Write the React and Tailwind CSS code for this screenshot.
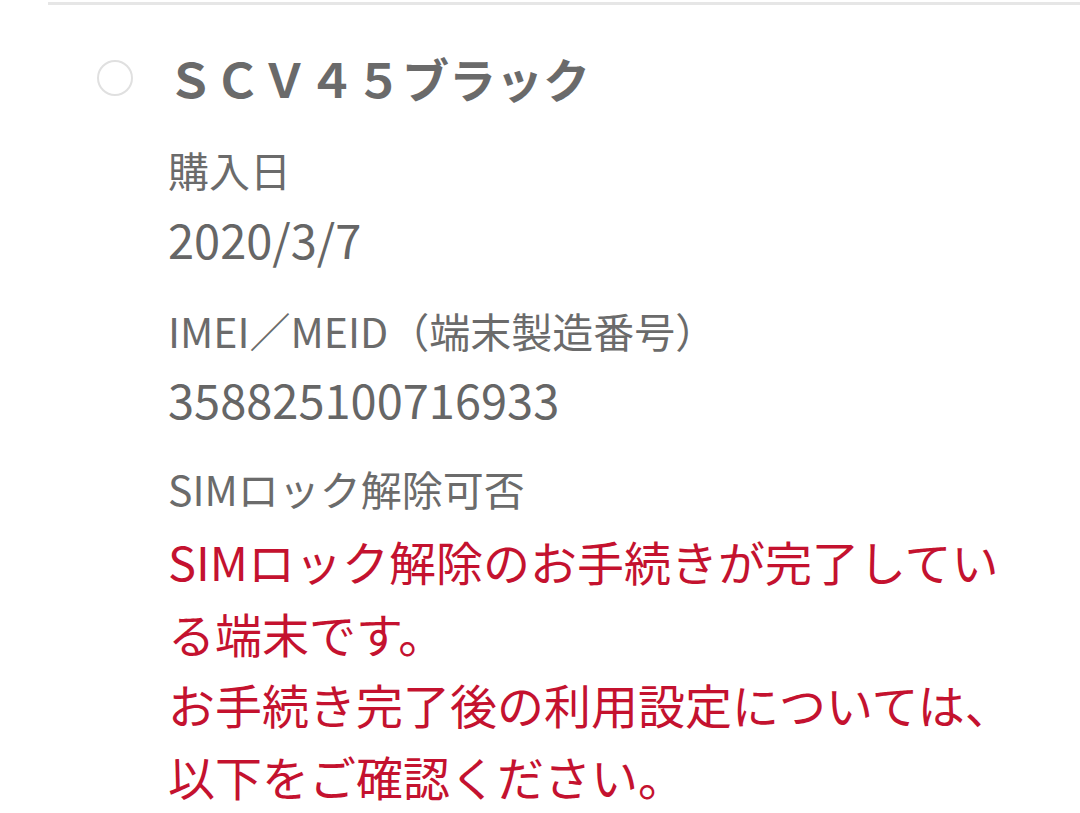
import React from "react";

const font = { fontFamily: '"Noto Sans CJK JP", "Noto Sans", sans-serif' };

const Label = ({ children, className = "" }) => (
  <div className={`text-[41px] leading-[56px] text-[#6b6b6b] ${className}`}>{children}</div>
);

const Value = ({ children, className = "" }) => (
  <div className={`text-[47px] leading-[70px] text-[#666666] ${className}`}>{children}</div>
);

export default function App() {
  return (
    <div className="min-h-screen w-[1080px] bg-white overflow-hidden" style={font}>
      <div className="pl-[48px] pt-[2px]">
        <div className="border-t-[3px] border-[#e6e6e6]" />
      </div>

      {/* 端末の見出し */}
      <div className="mt-[43px] flex items-center h-[60px]">
        <div className="ml-[97px] w-[36px] h-[36px] rounded-full border-2 border-[#e0e0e0] shrink-0" />
        <div className="ml-[34px] text-[47px] leading-[60px] font-bold text-[#6a6a6a]">
          ＳＣＶ４５ブラック
        </div>
      </div>

      <div className="pl-[168px] pr-[30px]">
        <Label className="mt-[33px]">購入日</Label>
        <Value className="mt-[7px]">2020/3/7</Value>

        <Label className="mt-[28px]">IMEI／MEID（端末製造番号）</Label>
        <Value className="mt-[6px]">358825100716933</Value>

        <Label className="mt-[26px]">SIMロック解除可否</Label>
        <div className="mt-[9px] text-[47px] leading-[71.5px] text-[#c4122f]">
          <div>SIMロック解除のお手続きが完了してい</div>
          <div>る端末です。</div>
          <div>お手続き完了後の利用設定については、</div>
          <div>以下をご確認ください。</div>
        </div>
      </div>
    </div>
  );
}
